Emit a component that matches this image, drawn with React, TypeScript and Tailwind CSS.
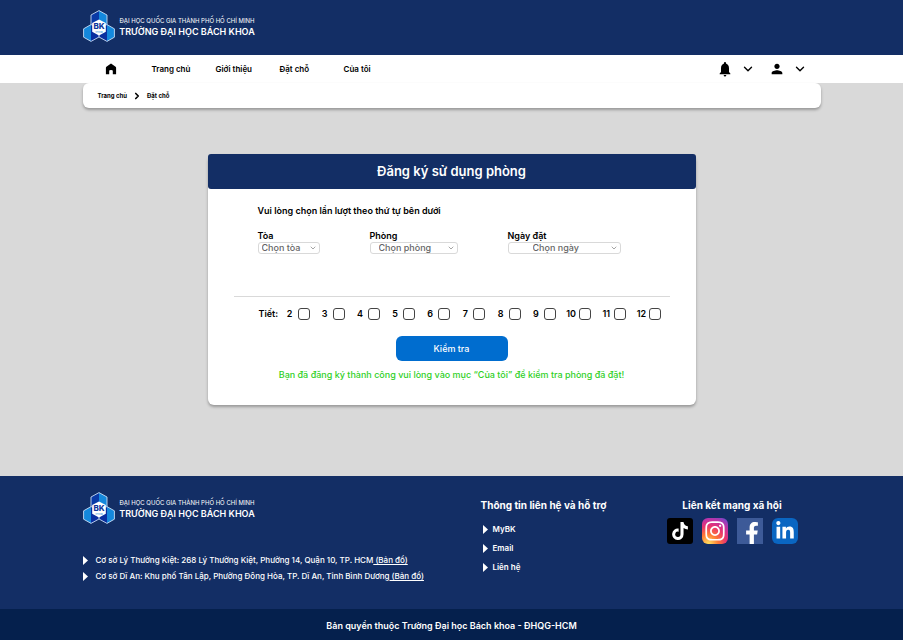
import React from "react";
import { FaTiktok, FaInstagram, FaFacebookF, FaLinkedinIn } from "react-icons/fa";
import { MdNotifications, MdPerson } from "react-icons/md";
import { ChevronDown, ChevronRight } from "lucide-react";

function LogoMark() {
  return (
    <svg viewBox="0 0 32 32" className="size-8 shrink-0" aria-hidden="true">
      <path d="M16 .6 8 5v9.6l8 4.6z" fill="#0a3aa6" />
      <path d="M16 .6 24 5v9.6l-8 4.6z" fill="#1488dc" />
      <path d="M8 14.6.6 18.8v8.4L8 31.4z" fill="#1488dc" />
      <path d="M8 14.6v16.8l8-4.4v-7.8z" fill="#0a2fa0" />
      <path d="M24 14.6v16.8L16 27v-7.8z" fill="#0a2fa0" />
      <path d="m24 14.6 7.4 4.2v8.4L24 31.4z" fill="#1488dc" />
      <g fill="none" stroke="#c9dcf5" strokeWidth="0.9" strokeLinejoin="round">
        <path d="M16 .6 24 5v9.6l7.4 4.2v8.4L24 31.4 16 27l-8 4.4-7.4-4.2v-8.4L8 14.6V5z" />
        <path d="M16 27v-4M8 14.6l3 1M24 14.6l-3 1" />
      </g>
      <path d="m16 9.4 6.8 3.6v8.8L16 25.4 9.2 21.8V13z" fill="#fff" />
      <text x="16" y="19" textAnchor="middle" fontSize="8" fontWeight="800" fill="#10379c">BK</text>
      <text x="16" y="23" textAnchor="middle" fontSize="2" fontWeight="600" fill="#3f9be2">TPHCM</text>
    </svg>
  );
}

function Brand() {
  return (
    <div className="flex items-center gap-[2px]">
      <LogoMark />
      <div className="w-[141px] whitespace-nowrap text-center text-white">
        <p className="text-[6px] leading-[10px]">ĐẠI HỌC QUỐC GIA THÀNH PHỐ HỒ CHÍ MINH</p>
        <p className="text-[9px] leading-[11px] font-semibold">TRƯỜNG ĐẠI HỌC BÁCH KHOA</p>
      </div>
    </div>
  );
}

const navItems = ["Trang chủ", "Giới thiệu", "Đặt chỗ", "Của tôi"];

function Header() {
  return (
    <header>
      <div className="bg-[#132e65] pt-[10px] pb-[13px]">
        <div className="mx-auto w-full max-w-[738px]">
          <Brand />
        </div>
      </div>
      <div className="bg-white">
        <div className="mx-auto flex h-7 w-full max-w-[738px] items-center justify-between pr-[14px] pl-[22px]">
          <nav className="flex items-center">
            <a href="#" aria-label="Trang chủ" className="w-[47px]">
              <svg viewBox="0 0 12 12" className="size-3" aria-hidden="true">
                <path d="M6 .4 10.6 3.8q.5.4.5 1V11.3H7.8V7.7Q7.8 7 6 7t-1.8.7v3.6H.9V4.8q0-.6.5-1z" />
              </svg>
            </a>
            {navItems.map((item) => (
              <a key={item} href="#" className="w-16 text-[8px] leading-3 font-semibold">
                {item}
              </a>
            ))}
          </nav>
          <div className="flex items-center gap-[14px]">
            <button type="button" aria-label="Thông báo" className="flex items-center gap-2">
              <MdNotifications className="h-[18px] w-4" preserveAspectRatio="none" />
              <ChevronDown className="size-[14px]" strokeWidth={2.4} />
            </button>
            <button type="button" aria-label="Tài khoản" className="flex items-center gap-2">
              <MdPerson className="size-4" />
              <ChevronDown className="size-[14px]" strokeWidth={2.4} />
            </button>
          </div>
        </div>
      </div>
    </header>
  );
}

function Field({ id, label, hint, box, pad }: { id: string; label: string; hint: string; box: string; pad: string }) {
  return (
    <div className={"flex flex-col " + box}>
      <label htmlFor={id} className="text-[9px] leading-3 font-semibold">
        {label}
      </label>
      <div className="relative">
        <select
          id={id}
          className={"block h-3 w-full appearance-none rounded-[3px] border border-[#d9d9d9] bg-white text-[9px] leading-[10px] font-medium text-[#666] " + pad}
        >
          <option>{hint}</option>
        </select>
        <ChevronDown className="pointer-events-none absolute top-[2px] right-[3px] size-2 text-[#777]" />
      </div>
    </div>
  );
}

const periods = [2, 3, 4, 5, 6, 7, 8, 9, 10, 11, 12];

function BookingCard() {
  return (
    <form className="mx-auto mt-[46px] w-full max-w-[488px] rounded-md bg-white shadow-[0_2px_3px_rgba(0,0,0,0.3)]">
      <h1 className="rounded-[3px] bg-[#132e65] text-center text-[13px] leading-[35px] font-semibold text-white">
        Đăng ký sử dụng phòng
      </h1>
      <div className="px-[26px] pt-4 pb-6">
        <div className="px-6">
          <p className="text-[9px] leading-3 font-semibold">Vui lòng chọn lần lượt theo thứ tự bên dưới</p>
          <div className="mt-[13px] flex gap-[50px]">
            <Field id="building" label="Tòa" hint="Chọn tòa" box="w-[62px]" pad="pl-[3px]" />
            <Field id="room" label="Phòng" hint="Chọn phòng" box="w-[88px]" pad="pl-2" />
            <Field id="date" label="Ngày đặt" hint="Chọn ngày" box="w-[113px]" pad="pl-6" />
          </div>
        </div>
        <hr className="mt-[42px] border-[#d9d9d9]" />
        <fieldset className="mt-[11px] flex items-center pr-2 pl-[25px] text-[9px] leading-3 font-semibold">
          <span className="w-[23px]">Tiết:</span>
          <div className="flex flex-1 justify-between">
            {periods.map((n) => (
              <label key={n} className="flex items-center">
                <span className="w-4 text-center">{n}</span>
                <input type="checkbox" className="size-3 appearance-none rounded-[3px] border border-[#444] bg-white checked:bg-[#006dcf]" />
              </label>
            ))}
          </div>
        </fieldset>
        <button
          type="button"
          className="mx-auto mt-4 block h-[25px] w-28 rounded-md bg-[#006dcf] text-[9px] leading-3 font-medium text-white"
        >
          Kiểm tra
        </button>
        <p className="mt-2 text-center text-[9px] leading-3 font-medium text-[#2fd01f]">
          Bạn đã đăng ký thành công vui lòng vào mục “Của tôi” để kiểm tra phòng đã đặt!
        </p>
      </div>
    </form>
  );
}

function Triangle() {
  return (
    <svg viewBox="0 0 5 8" preserveAspectRatio="none" className="h-[9px] w-[5px] shrink-0" aria-hidden="true">
      <path d="M0 0 5 4 0 8z" fill="#fff" />
    </svg>
  );
}

const addresses = [
  "Cơ sở Lý Thường Kiệt: 268 Lý Thường Kiệt, Phường 14, Quận 10, TP. HCM",
  "Cơ sở Dĩ An: Khu phố Tân Lập, Phường Đông Hòa, TP. Dĩ An, Tỉnh Bình Dương",
];

const social = "flex size-[26px] items-center justify-center";

function Footer() {
  return (
    <footer className="bg-[#132e65] text-white">
      <div className="mx-auto grid min-h-[133px] w-full max-w-[738px] grid-cols-[398fr_186fr_154fr] pt-4 pb-6">
        <div>
          <Brand />
          <ul className="mt-[30px] flex flex-col gap-1 text-[8px] leading-3 font-medium whitespace-nowrap">
            {addresses.map((address) => (
              <li key={address} className="flex items-center gap-2">
                <Triangle />
                <span>
                  {address}
                  <a href="#" className="underline">
                    {" (Bản đồ)"}
                  </a>
                </span>
              </li>
            ))}
          </ul>
        </div>
        <div className="pt-[7px]">
          <h2 className="text-[10px] leading-3 font-bold">Thông tin liên hệ và hỗ trợ</h2>
          <ul className="mt-3 flex flex-col gap-[7px] pl-[2px] text-[8px] leading-3 font-semibold">
            {["MyBK", "Email", "Liên hệ"].map((item) => (
              <li key={item}>
                <a href="#" className="flex items-center gap-[5px]">
                  <Triangle />
                  {item}
                </a>
              </li>
            ))}
          </ul>
        </div>
        <div className="w-fit pt-[7px]">
          <h2 className="text-center text-[10px] leading-3 font-bold">Liên kết mạng xã hội</h2>
          <div className="mt-[7px] flex gap-[9px]">
            <a href="#" aria-label="TikTok" className={social + " rounded-[3px] bg-black"}>
              <FaTiktok className="size-[18px]" />
            </a>
            <a
              href="#"
              aria-label="Instagram"
              className={social + " rounded-md bg-[radial-gradient(circle_at_25%_100%,#ffd45a_5%,#ff7a35_30%,#e8336f_55%,#c032a5_75%,#5b50d8_100%)]"}
            >
              <FaInstagram className="size-[22px]" />
            </a>
            <a href="#" aria-label="Facebook" className="flex size-[26px] items-end justify-end bg-[#3d5a98] pr-1">
              <FaFacebookF className="h-[22px] w-[14px]" />
            </a>
            <a href="#" aria-label="LinkedIn" className={social + " rounded-md bg-[#0a66c2]"}>
              <FaLinkedinIn className="size-5" />
            </a>
          </div>
        </div>
      </div>
      <p className="bg-[#05204d] pt-[11px] pb-2 text-center text-[9px] leading-3 font-semibold">
        Bản quyền thuộc Trường Đại học Bách khoa - ĐHQG-HCM
      </p>
    </footer>
  );
}

export default function App() {
  return (
    <div className="flex min-h-screen flex-col bg-[#d9d9d9] font-['Inter','Liberation_Sans',sans-serif] text-black">
      <Header />
      <main className="flex-1 pb-[70px]">
        <div className="mx-auto flex h-[25px] w-full max-w-[738px] items-center gap-[5px] rounded-md bg-white px-[15px] text-[6px] leading-3 font-bold shadow-[0_2px_3px_rgba(0,0,0,0.3)]">
          <a href="#">Trang chủ</a>
          <ChevronRight className="size-[10px]" strokeWidth={4} />
          <a href="#">Đặt chỗ</a>
        </div>
        <BookingCard />
      </main>
      <Footer />
    </div>
  );
}
